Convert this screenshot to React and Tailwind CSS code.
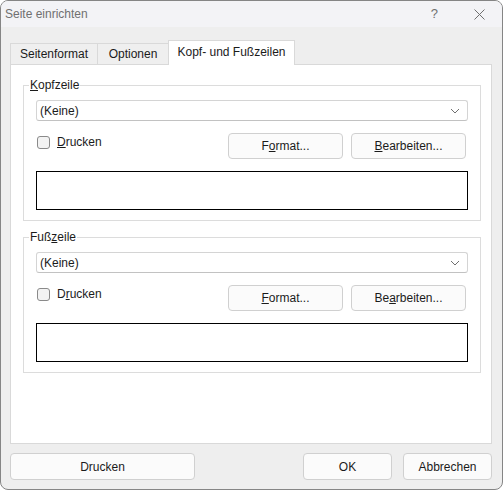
const font = { fontFamily: '"Liberation Sans", Arial, sans-serif' };

function Btn({ children, className = "" }) {
  return (
    <button
      className={`flex h-[26px] items-center justify-center rounded-[4px] border border-[#d0d0d0] bg-[#fbfbfb] text-[12px] text-[#1b1b1b] ${className}`}
    >
      {children}
    </button>
  );
}

function Chevron() {
  return (
    <svg width="10" height="6" viewBox="0 0 10 6" className="text-[#707070]">
      <path d="M1 1 L5 5 L9 1" fill="none" stroke="currentColor" strokeWidth="1" />
    </svg>
  );
}

function Group({ label, printLabel, formatLabel, editLabel, className = "" }) {
  return (
    <fieldset className={`ml-[12px] w-[457px] border border-[#dcdcdc] px-[12px] pb-[10px] pt-[7px] ${className}`}>
      <legend className="ml-[-7px] px-[1px] text-[12px] leading-[16px] text-[#1b1b1b]">{label}</legend>
      <div className="flex h-[21px] w-[432px] items-center justify-between rounded-[3px] border border-[#d4d4d4] border-b-[#c2c2c2] bg-white pl-[3px] pr-[7px] text-[12px] text-[#1b1b1b]">
        <span>(Keine)</span>
        <Chevron />
      </div>
      <div className="mt-[12px] flex h-[26px] w-[432px] items-start">
        <div className="mt-[3px] flex items-center">
          <span className="ml-[1px] h-[13px] w-[13px] rounded-[3px] border border-[#8a8a8a] bg-[#f3f3f3]" />
          <span className="ml-[7px] text-[12px] leading-[13px] text-[#1b1b1b]">{printLabel}</span>
        </div>
        <div className="ml-auto mr-[2px] flex gap-[8px]">
          <Btn className="w-[115px]">{formatLabel}</Btn>
          <Btn className="w-[115px]">{editLabel}</Btn>
        </div>
      </div>
      <div className="mt-[12px] h-[39px] w-[432px] border border-black bg-white" />
    </fieldset>
  );
}

export default function App() {
  return (
    <div className="h-[490px] w-[504px] bg-white" style={font}>
      <div className="flex h-[490px] w-[503px] flex-col overflow-hidden rounded-[8px] border border-[#858585] bg-[#eeeeee]">
        <div className="flex h-[26px] shrink-0 items-center bg-[#f3f3f6] pl-[4px] text-[12px] text-[#707070]">
          <span>Seite einrichten</span>
          <span className="ml-auto mr-[36px] text-[13px]">?</span>
          <svg width="11" height="11" viewBox="0 0 11 11" className="mr-[17px]">
            <path d="M0.5 0.5 L10.5 10.5 M10.5 0.5 L0.5 10.5" stroke="#6f6f6f" strokeWidth="1" />
          </svg>
        </div>

        <div className="ml-[9px] mt-[13px] flex h-[24px] items-end text-[12px] text-[#1b1b1b]">
          <div className="flex h-[21px] w-[88px] items-center justify-center border-l border-r border-t border-[#d9d9d9] bg-[#efefef]">
            Seitenformat
          </div>
          <div className="flex h-[21px] w-[70px] items-center justify-center border-t border-[#d9d9d9] bg-[#efefef]">
            Optionen
          </div>
          <div className="relative z-10 -mb-px flex h-[25px] w-[127px] items-center justify-center border-l border-r border-t border-[#d9d9d9] bg-white pb-[2px]">
            Kopf- und Fußzeilen
          </div>
        </div>

        <div className="ml-[9px] h-[380px] w-[482px] border border-[#d9d9d9] bg-white pt-[12px]">
          <Group
            label={<><u>K</u>opfzeile</>}
            printLabel={<><u>D</u>rucken</>}
            formatLabel={<>F<u>o</u>rmat...</>}
            editLabel={<><u>B</u>earbeiten...</>}
          />
          <Group
            className="mt-[8px]"
            label={<>Fuß<u>z</u>eile</>}
            printLabel={<>D<u>r</u>ucken</>}
            formatLabel={<><u>F</u>ormat...</>}
            editLabel={<>Be<u>a</u>rbeiten...</>}
          />
        </div>

        <div className="ml-[9px] mt-[9px] flex w-[482px]">
          <Btn className="h-[27px] w-[185px]">Drucken</Btn>
          <Btn className="ml-auto h-[27px] w-[89px] border-[#0067c0]">OK</Btn>
          <Btn className="ml-[11px] h-[27px] w-[89px]">Abbrechen</Btn>
        </div>
      </div>
    </div>
  );
}
